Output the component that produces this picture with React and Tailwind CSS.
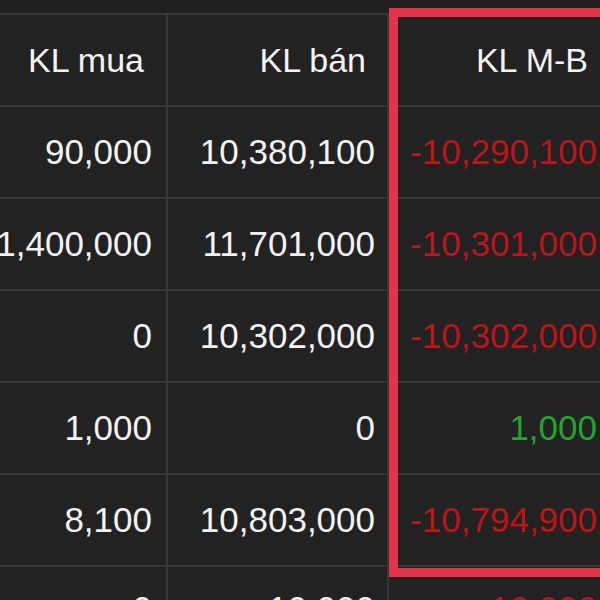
import React from 'react';

const rows = [
  { buy: '90,000', sell: '10,380,100', diff: '-10,290,100', up: false },
  { buy: '1,400,000', sell: '11,701,000', diff: '-10,301,000', up: false },
  { buy: '0', sell: '10,302,000', diff: '-10,302,000', up: false },
  { buy: '1,000', sell: '0', diff: '1,000', up: true },
  { buy: '8,100', sell: '10,803,000', diff: '-10,794,900', up: false },
  { buy: '0', sell: '10,000', diff: '-10,000', up: false, last: true },
];

const Row = ({ buy, sell, diff, up, header, last }) => (
  <div
    className={`flex shrink-0 border-t-2 border-[#363636] ${last ? 'h-[86px]' : 'h-[92px]'} ${
      header ? 'text-[34px]' : 'text-[35px]'
    }`}
  >
    <div className={`flex w-[168px] shrink-0 items-center justify-end border-r-2 border-[#363636] ${header ? 'pr-[22px]' : 'pr-[14px]'}`}>
      {buy}
    </div>
    <div className={`flex w-[221px] shrink-0 items-center justify-end border-r-2 border-[#363636] ${header ? 'pr-[21px]' : 'pr-[12px]'}`}>
      {sell}
    </div>
    <div
      className={`flex flex-1 items-center justify-end whitespace-nowrap ${
        header ? 'pr-[12px] text-[#f2f2f2]' : up ? 'pr-[3px] text-[#22a52d]' : 'pr-[3px] text-[#bc141b]'
      }`}
    >
      {diff}
    </div>
  </div>
);

export default function App() {
  return (
    <div
      className="relative h-[600px] w-[600px] overflow-hidden bg-[#222222] text-[#f2f2f2]"
      style={{ fontFamily: '"Liberation Sans", Arial, sans-serif' }}
    >
      <div className="h-[13px] bg-[#1f1f1f]" />
      <div className="flex flex-col">
        <Row header buy="KL mua" sell="KL bán" diff="KL M-B" />
        {rows.map((r, i) => (
          <Row key={i} {...r} />
        ))}
      </div>
      {/* highlight box drawn over the KL M-B column */}
      <div className="pointer-events-none absolute left-[389px] top-[8px] h-[569px] w-[240px] border-[9px] border-[#e2354b]" />
    </div>
  );
}
